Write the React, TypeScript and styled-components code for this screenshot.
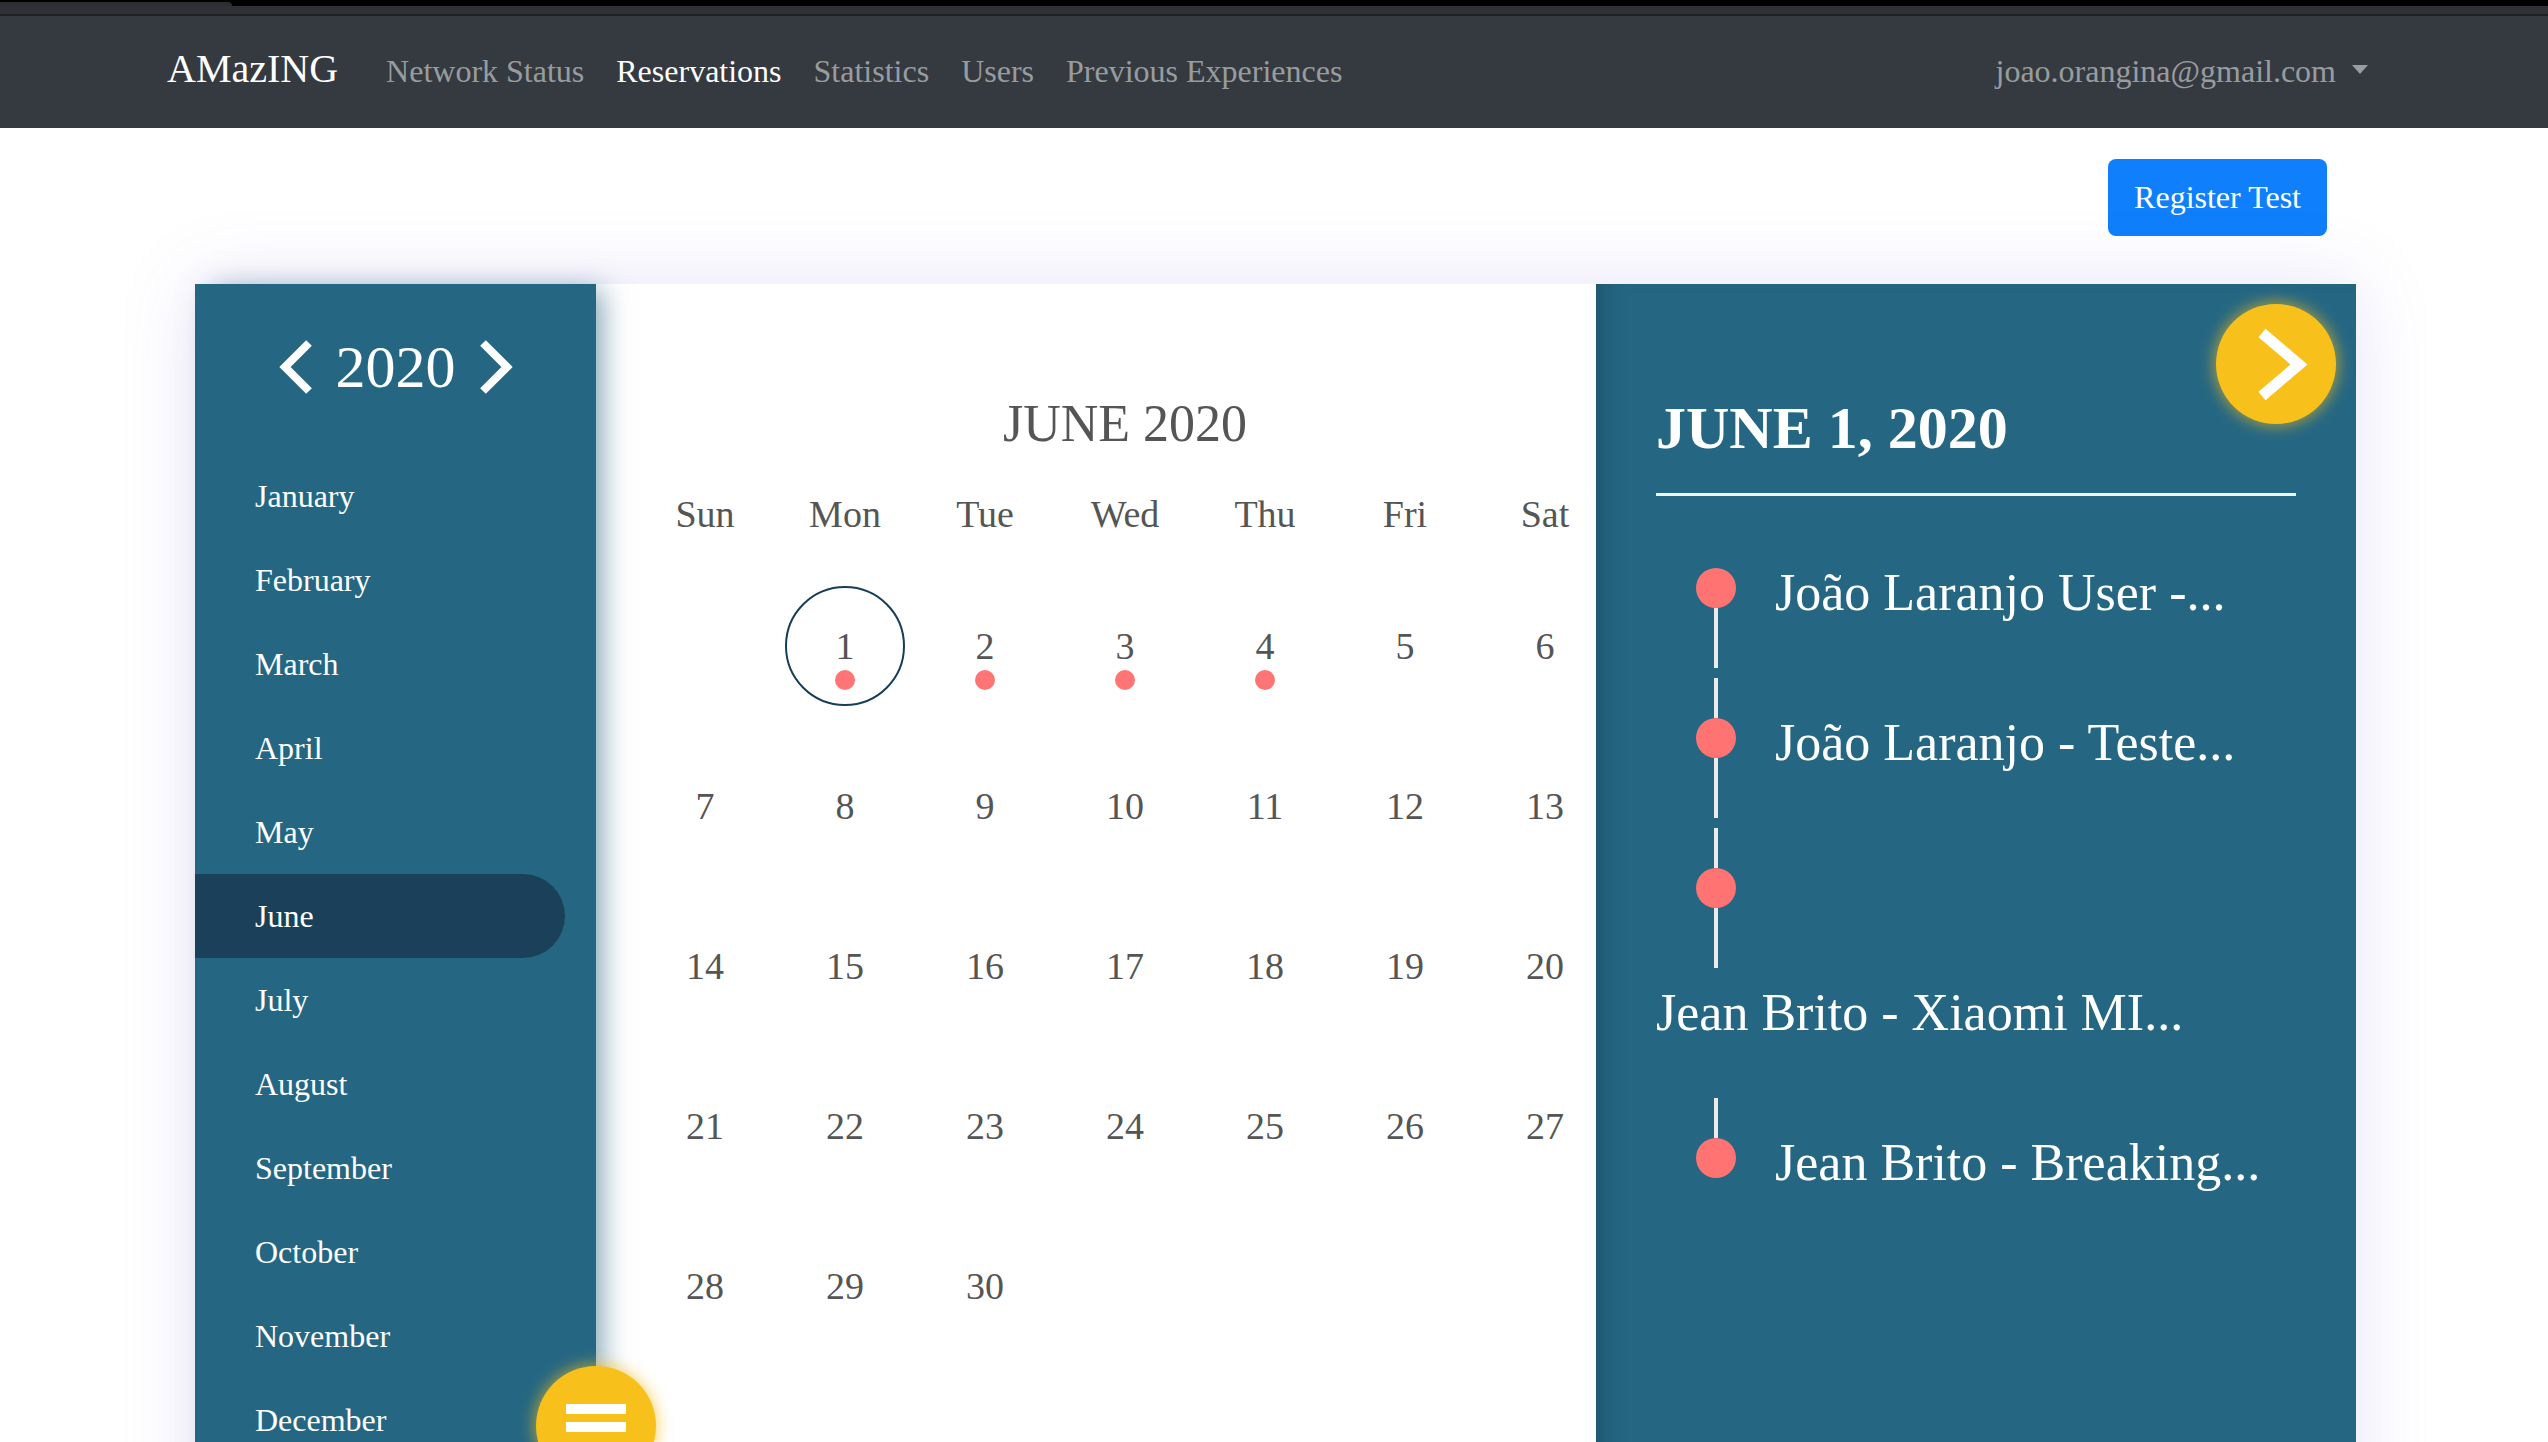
import React from 'react';
import styled, { createGlobalStyle } from 'styled-components';

const GlobalStyle = createGlobalStyle`
  html, body { margin: 0; padding: 0; background: #ffffff; overflow: hidden; }
  body { font-family: "Liberation Serif", "Times New Roman", serif; }
  *, *::before, *::after { box-sizing: border-box; }
`;

const Page = styled.div`
  width: 2548px;
  height: 1442px;
  overflow: hidden;
  background: #ffffff;
`;

const TopStrip = styled.div`
  height: 16px;
  position: relative;
  background: linear-gradient(
    to bottom,
    #000 0,
    #000 6px,
    #303136 6px,
    #303136 14px,
    #1f2023 14px,
    #1f2023 16px
  );
  &::before {
    content: '';
    position: absolute;
    left: 0;
    top: 2px;
    width: 232px;
    height: 4px;
    background: #2c2d31;
    border-top-right-radius: 6px;
  }
`;

const Navbar = styled.nav`
  height: 112px;
  background: #343a40;
`;

const NavContainer = styled.div`
  max-width: 2280px;
  height: 100%;
  margin: 0 auto;
  padding: 23px 30px 0 33px;
  display: flex;
  align-items: baseline;
`;

const Brand = styled.a`
  font-size: 40px;
  line-height: 60px;
  color: #ffffff;
  margin-right: 32px;
  text-decoration: none;
`;

const NavLinks = styled.div`
  display: flex;
  align-items: baseline;
`;

const NavLink = styled.a<{ $active?: boolean }>`
  font-size: 32px;
  line-height: 48px;
  padding: 0 16px;
  color: ${(p) => (p.$active ? '#ffffff' : 'rgba(255,255,255,0.5)')};
  text-decoration: none;
`;

const UserMenu = styled.a`
  margin-left: auto;
  font-size: 32px;
  line-height: 48px;
  padding: 0 16px;
  color: rgba(255, 255, 255, 0.5);
  &::after {
    content: '';
    display: inline-block;
    margin-left: 16px;
    vertical-align: 0.255em;
    border-top: 9px solid rgba(255, 255, 255, 0.5);
    border-left: 8.5px solid transparent;
    border-right: 8.5px solid transparent;
  }
`;

const Toolbar = styled.div`
  max-width: 2280px;
  margin: 0 auto;
  padding: 31px 87px 0 30px;
  display: flex;
  justify-content: flex-end;
`;

const PrimaryButton = styled.button`
  height: 77px;
  padding: 0 26px;
  border: none;
  border-radius: 8px;
  background: #0f7ffb;
  color: #ffffff;
  font-family: inherit;
  font-size: 32px;
`;

const Card = styled.div`
  width: 2161px;
  height: 1300px;
  margin: 48px 0 0 195px;
  display: flex;
  position: relative;
  box-shadow: 0 0 70px rgba(110, 90, 210, 0.17);
`;

const Sidebar = styled.aside`
  width: 401px;
  flex: none;
  background: #256783;
  position: relative;
  z-index: 2;
  box-shadow: 12px 0 26px -6px rgba(30, 90, 120, 0.55);
`;

const YearNav = styled.div`
  padding-top: 55px;
  display: flex;
  justify-content: center;
  align-items: center;
  gap: 22px;
`;

const YearText = styled.span`
  font-size: 60px;
  line-height: 56px;
  color: #ffffff;
`;

const MonthList = styled.ul`
  list-style: none;
  margin: 59px 0 0;
  padding: 0;
`;

const MonthItem = styled.li<{ $active?: boolean }>`
  height: 84px;
  width: 370px;
  padding-left: 60px;
  font-size: 32px;
  line-height: 84px;
  color: #ffffff;
  background: ${(p) => (p.$active ? '#1a4159' : 'transparent')};
  border-radius: 0 42px 42px 0;
`;

const CalendarArea = styled.section`
  width: 1000px;
  flex: none;
  background: #ffffff;
  padding-left: 39px;
  position: relative;
  z-index: 1;
`;

const MonthTitle = styled.h2`
  width: 980px;
  margin: 110px 0 0;
  font-size: 52px;
  line-height: 60px;
  font-weight: normal;
  text-align: center;
  color: #555555;
`;

const WeekdayRow = styled.div`
  margin-top: 30px;
  display: grid;
  grid-template-columns: repeat(7, 140px);
`;

const Weekday = styled.div`
  height: 60px;
  font-size: 38px;
  line-height: 60px;
  text-align: center;
  color: #555555;
`;

const DayGrid = styled.div`
  margin-top: 22px;
  display: grid;
  grid-template-columns: repeat(7, 140px);
  grid-auto-rows: 160px;
`;

const DayCell = styled.div`
  display: flex;
  align-items: center;
  justify-content: center;
`;

const DayCircle = styled.div<{ $selected?: boolean }>`
  width: 120px;
  height: 120px;
  border-radius: 50%;
  border: 2px solid ${(p) => (p.$selected ? '#173e56' : 'transparent')};
  display: flex;
  align-items: center;
  justify-content: center;
  position: relative;
  font-size: 38px;
  line-height: 1;
  color: #555555;
`;

const EventDot = styled.span`
  position: absolute;
  left: 50%;
  top: calc(50% + 24px);
  width: 20px;
  height: 20px;
  margin-left: -10px;
  border-radius: 50%;
  background: #ff7474;
`;

const DetailPanel = styled.section`
  width: 760px;
  flex: none;
  background: #256783;
  padding: 0 60px;
  position: relative;
  z-index: 1;
  box-shadow: inset 22px 0 22px -14px rgba(0, 0, 0, 0.18);
`;

const DetailTitle = styled.h2`
  margin: 109px 0 0;
  font-size: 60px;
  line-height: 70px;
  font-weight: bold;
  color: #ffffff;
`;

const Divider = styled.div`
  margin-top: 30px;
  height: 3px;
  background: #f3f3f3;
`;

const Timeline = styled.div`
  margin-top: 72px;
  display: flex;
  flex-direction: column;
  gap: 10px;
`;

const TimelineItem = styled.div`
  display: flex;
  flex-direction: column;
`;

const RailLine = styled.div<{ $h: number }>`
  width: 4px;
  height: ${(p) => p.$h}px;
  margin-left: 58px;
  background: #ebebeb;
`;

const ItemRow = styled.div`
  height: 40px;
  display: flex;
  align-items: flex-start;
`;

const Dot = styled.span`
  width: 40px;
  height: 40px;
  flex: none;
  margin-left: 40px;
  border-radius: 50%;
  background: #ff7373;
`;

const ItemText = styled.span`
  margin-left: 39px;
  padding-top: 4.5px;
  font-size: 52px;
  line-height: 40px;
  color: #ffffff;
  white-space: nowrap;
`;

const WrappedText = styled.div`
  font-size: 52px;
  line-height: 89px;
  margin-bottom: 31px;
  color: #ffffff;
  white-space: nowrap;
`;

const Fab = styled.button`
  position: absolute;
  width: 120px;
  height: 120px;
  padding: 0;
  border: none;
  border-radius: 50%;
  background: #f8c01b;
  box-shadow: 0 0 14px 3px rgba(248, 192, 27, 0.55);
  display: flex;
  align-items: center;
  justify-content: center;
  z-index: 5;
`;

const NextFab = styled(Fab)`
  top: 20px;
  right: 20px;
`;

const MenuFab = styled(Fab)`
  left: 341px;
  top: 1082px;
  flex-direction: column;
  justify-content: flex-start;
  padding-top: 38px;
  gap: 8px;
`;

const MenuBar = styled.span`
  width: 60px;
  height: 10px;
  background: #ffffff;
`;

const Chevron = ({ dir }: { dir: 'left' | 'right' }) => (
  <svg width="36" height="56" viewBox="0 0 36 56">
    <polyline
      points={dir === 'left' ? '31,4 7,28 31,52' : '5,4 29,28 5,52'}
      fill="none"
      stroke="#ffffff"
      strokeWidth="8"
      strokeLinejoin="miter"
    />
  </svg>
);

const MONTHS = [
  'January',
  'February',
  'March',
  'April',
  'May',
  'June',
  'July',
  'August',
  'September',
  'October',
  'November',
  'December',
];

const WEEKDAYS = ['Sun', 'Mon', 'Tue', 'Wed', 'Thu', 'Fri', 'Sat'];

const DAYS: (number | null)[] = [null, ...Array.from({ length: 30 }, (_, i) => i + 1)];
const EVENT_DAYS = new Set([1, 2, 3, 4]);

export default function App() {
  return (
    <Page>
      <GlobalStyle />
      <TopStrip />
      <Navbar>
        <NavContainer>
          <Brand>AMazING</Brand>
          <NavLinks>
            <NavLink>Network Status</NavLink>
            <NavLink $active>Reservations</NavLink>
            <NavLink>Statistics</NavLink>
            <NavLink>Users</NavLink>
            <NavLink>Previous Experiences</NavLink>
          </NavLinks>
          <UserMenu>joao.orangina@gmail.com</UserMenu>
        </NavContainer>
      </Navbar>

      <Toolbar>
        <PrimaryButton>Register Test</PrimaryButton>
      </Toolbar>

      <Card>
        <Sidebar>
          <YearNav>
            <Chevron dir="left" />
            <YearText>2020</YearText>
            <Chevron dir="right" />
          </YearNav>
          <MonthList>
            {MONTHS.map((m) => (
              <MonthItem key={m} $active={m === 'June'}>
                {m}
              </MonthItem>
            ))}
          </MonthList>
        </Sidebar>

        <CalendarArea>
          <MonthTitle>JUNE 2020</MonthTitle>
          <WeekdayRow>
            {WEEKDAYS.map((d) => (
              <Weekday key={d}>{d}</Weekday>
            ))}
          </WeekdayRow>
          <DayGrid>
            {DAYS.map((d, i) => (
              <DayCell key={i}>
                {d !== null && (
                  <DayCircle $selected={d === 1}>
                    {d}
                    {EVENT_DAYS.has(d) && <EventDot />}
                  </DayCircle>
                )}
              </DayCell>
            ))}
          </DayGrid>
        </CalendarArea>

        <DetailPanel>
          <DetailTitle>JUNE 1, 2020</DetailTitle>
          <Divider />
          <Timeline>
            <TimelineItem>
              <ItemRow>
                <Dot />
                <ItemText>João Laranjo User -...</ItemText>
              </ItemRow>
              <RailLine $h={60} />
            </TimelineItem>
            <TimelineItem>
              <RailLine $h={40} />
              <ItemRow>
                <Dot />
                <ItemText>João Laranjo - Teste...</ItemText>
              </ItemRow>
              <RailLine $h={60} />
            </TimelineItem>
            <TimelineItem>
              <RailLine $h={40} />
              <ItemRow>
                <Dot />
              </ItemRow>
              <RailLine $h={60} />
              <WrappedText>Jean Brito - Xiaomi MI...</WrappedText>
            </TimelineItem>
            <TimelineItem>
              <RailLine $h={40} />
              <ItemRow>
                <Dot />
                <ItemText>Jean Brito - Breaking...</ItemText>
              </ItemRow>
            </TimelineItem>
          </Timeline>
          <NextFab aria-label="Next">
            <svg width="120" height="120" viewBox="0 0 120 120">
              <polyline
                points="46,29 83,60.5 46,92"
                fill="none"
                stroke="#ffffff"
                strokeWidth="11"
              />
            </svg>
          </NextFab>
        </DetailPanel>

        <MenuFab aria-label="Menu">
          <MenuBar />
          <MenuBar />
        </MenuFab>
      </Card>
    </Page>
  );
}
